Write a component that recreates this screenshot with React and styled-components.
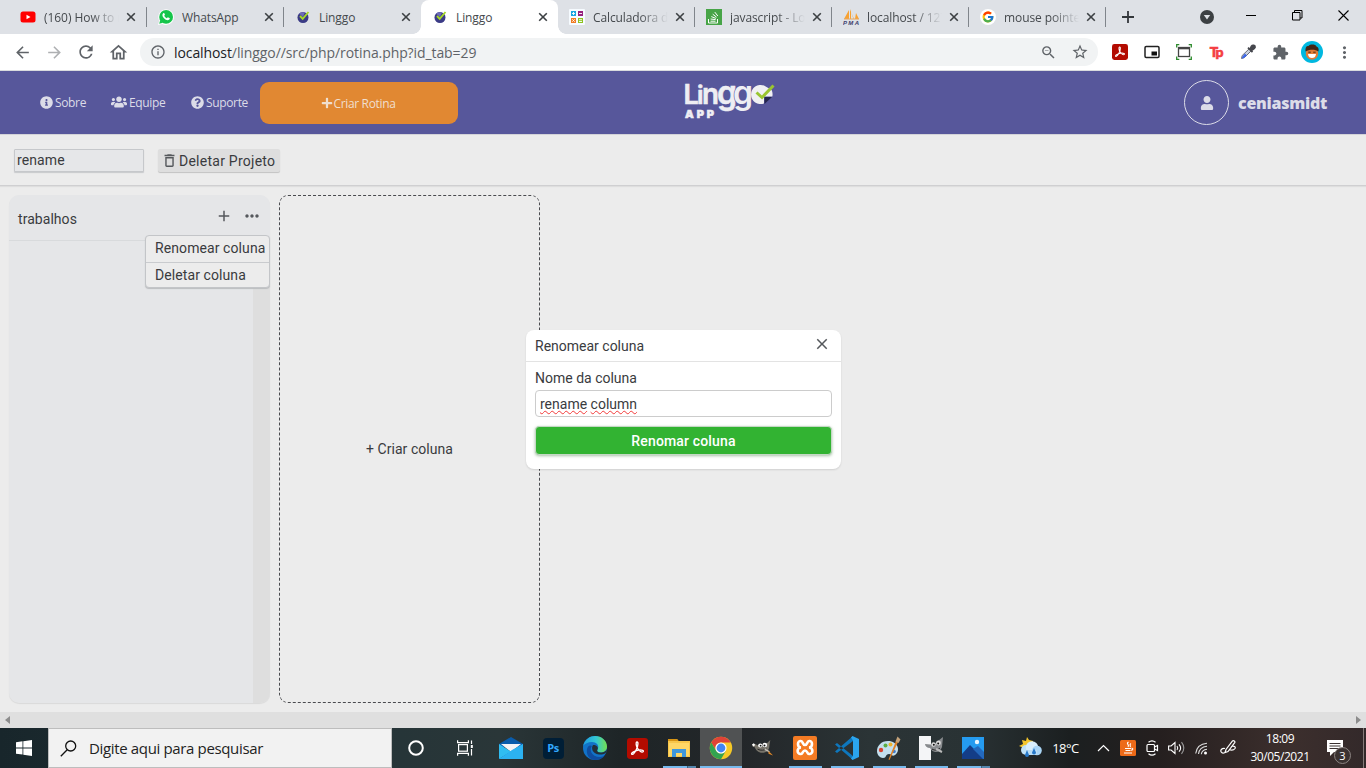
import React from "react";
import styled, { createGlobalStyle, css } from "styled-components";
import { FaInfoCircle, FaUsers, FaQuestionCircle, FaPlus, FaUser, FaWhatsapp, FaStackOverflow } from "react-icons/fa";
import {
  MdArrowBack, MdArrowForward, MdRefresh, MdOutlineHome, MdInfoOutline, MdStarBorder,
  MdExtension, MdMoreVert, MdPictureInPictureAlt, MdDeleteOutline, MdAdd, MdMoreHoriz,
  MdClose, MdOutlineZoomOut,
} from "react-icons/md";
import { FcGoogle } from "react-icons/fc";

const ui = `"Open Sans", "Noto Sans", sans-serif`;

const GlobalStyle = createGlobalStyle`
  * { box-sizing: border-box; }
  body { margin: 0; overflow: hidden; font-family: Roboto, sans-serif; color: #3a3b3e; }
  svg { display: block; flex: none; }
  button, input { font: inherit; color: inherit; letter-spacing: inherit; }
  button { border: 0; padding: 0; background: none; }
`;

const Screen = styled.div`
  width: 1366px;
  height: 768px;
  display: flex;
  flex-direction: column;
  overflow: hidden;
  background: #ececec;
`;

/* ---------- browser ---------- */
const TabStrip = styled.div`
  flex: none;
  height: 34px;
  padding-left: 9px;
  display: flex;
  background: #dee1e6;
`;
const Tab = styled.div`
  position: relative;
  width: ${(p) => (p.$first ? 138 : 137)}px;
  height: 34px;
  padding-left: ${(p) => (p.$first ? 11 : 11)}px;
  display: flex;
  align-items: center;
  font-family: ${ui};
  font-size: 12px;
  color: #45494d;
  border-radius: 8px 8px 0 0;
  ${(p) => p.$active && css`
    background: #fff;
    &::before, &::after {
      content: "";
      position: absolute;
      bottom: 0;
      width: 8px;
      height: 8px;
    }
    &::before { left: -8px; background: radial-gradient(circle at 0 0, #dee1e6 7.5px, #fff 8px); }
    &::after { right: -8px; background: radial-gradient(circle at 100% 0, #dee1e6 7.5px, #fff 8px); }
  `}
  ${(p) => p.$divider && css`box-shadow: inset -1px 0 #dee1e6;
    background: linear-gradient(#80858b, #80858b) right 0 top 7px / 1px 20px no-repeat;
    box-shadow: none;`}
`;
const Favicon = styled.span`
  width: 16px;
  height: 16px;
  margin-right: 8px;
  display: grid;
  place-items: center;
`;
const TabTitle = styled.span`
  width: 75px;
  overflow: hidden;
  white-space: nowrap;
  letter-spacing: ${(p) => p.$ls || -0.1}px;
  ${(p) => p.$fade && css`mask-image: linear-gradient(90deg, #000 62%, transparent 100%);`}
`;
const TabClose = styled.span`
  margin-left: 5px;
  width: 14px;
  height: 14px;
  display: grid;
  place-items: center;
`;
const NewTab = styled.span`
  width: 44px;
  display: grid;
  place-items: center;
  color: #33373b;
`;
const WindowButtons = styled.div`
  margin-left: 34px;
  display: flex;
  height: 30px;
  align-items: center;
`;
const WindowButton = styled.span`
  width: ${(p) => p.$w}px;
  display: grid;
  place-items: center;
`;
const Toolbar = styled.div`
  flex: none;
  height: 37px;
  padding-left: 6px;
  display: flex;
  align-items: center;
  background: #fff;
  border-bottom: 1px solid #d9dbde;
  color: #5f6368;
`;
const ToolButton = styled.span`
  width: 32px;
  height: 30px;
  display: grid;
  place-items: center;
  opacity: ${(p) => (p.$dim ? 0.5 : 1)};
`;
const AddressBar = styled.div`
  margin-left: 6px;
  width: 958px;
  height: 28px;
  padding: 0 2px 0 10px;
  display: flex;
  align-items: center;
  border-radius: 14px;
  background: #f1f3f4;
`;
const Url = styled.span`
  flex: 1;
  margin-left: 8px;
  font: 14px ${ui};
  letter-spacing: -0.09px;
  b { font-weight: 400; color: #202124; }
`;
const Extensions = styled.div`
  display: flex;
  margin-left: 6px;
`;

/* ---------- page ---------- */
const Header = styled.header`
  flex: none;
  height: 63px;
  display: flex;
  background: #57579b;
  color: #dcdce8;
  font-family: ${ui};
`;
const Nav = styled.nav`
  width: 458px;
  padding-left: 40px;
  display: flex;
  align-items: flex-start;
  font-size: 12px;
  letter-spacing: -0.35px;
`;
const NavLink = styled.a`
  width: ${(p) => p.$w}px;
  height: 62px;
  display: flex;
  align-items: center;
  gap: 2px;
  white-space: nowrap;
`;
const CreateButton = styled.button`
  width: 198px;
  height: 42px;
  margin-top: 11px;
  border-radius: 9px;
  background: #e18832;
  color: #f0dfce;
  display: flex;
  align-items: center;
  justify-content: center;
  gap: 1px;
  padding-right: 2px;
`;
const LogoWrap = styled.div`
  flex: 1;
  padding: 10px 0 0 224px;
`;
const Account = styled.div`
  width: 182px;
  display: flex;
  align-items: center;
  gap: 9px;
  font-weight: 800;
  font-size: 16px;
  letter-spacing: -0.25px;
`;
const Avatar = styled.span`
  width: 45px;
  height: 45px;
  border: 1px solid #dcdce8;
  border-radius: 50%;
  display: grid;
  place-items: center;
`;
const ProjectBar = styled.div`
  flex: none;
  height: 52px;
  padding: 0 14px;
  display: flex;
  align-items: center;
  gap: 14px;
  border-top: 1px solid #d3d3d8;
  border-bottom: 1px solid #cfcfd1;
  box-shadow: 0 1px 1px rgba(0, 0, 0, 0.06);
  font-size: 14px;
`;
const ProjectInput = styled.input`
  width: 130px;
  height: 23px;
  padding: 0 2px;
  border: 1px solid #c6c8cb;
  border-radius: 1px;
  background: #e6e7e9;
  box-shadow: 0 1px 1px #c8cacd;
  letter-spacing: 0.1px;
`;
const DeleteButton = styled.button`
  height: 23px;
  width: 122px;
  padding-left: 3px;
  display: flex;
  align-items: center;
  gap: 1px;
  background: #dedede;
  border-radius: 2px;
  box-shadow: 0 1px 1px rgba(0, 0, 0, 0.18);
  letter-spacing: 0.25px;
  margin-top: 1px;
  white-space: nowrap;
`;
const Board = styled.main`
  flex: 1;
  padding: 9px;
  display: flex;
  gap: 9px;
  font-size: 14px;
`;
const Column = styled.section`
  position: relative;
  width: 261px;
  height: 508px;
  border-radius: 10px;
  background: #e5e6e8;
  box-shadow: 0 1px 1px rgba(0, 0, 0, 0.08);
  display: flex;
  flex-direction: column;
`;
const ColumnHeader = styled.div`
  height: 46px;
  padding: 2px 8px 0 9px;
  display: flex;
  align-items: center;
  border-bottom: 1px solid #d8dadc;
  span { flex: 1; letter-spacing: 0.05px; }
`;
const ColumnIcon = styled.i`
  margin: -5px 0 0 9px;
  color: #55585c;
`;
const ColumnBody = styled.div`
  flex: 1;
  border-right: 17px solid #dedede;
  border-radius: 0 0 10px 10px;
`;
const Menu = styled.div`
  position: absolute;
  top: 40px;
  right: 0;
  width: 125px;
  height: 53px;
  border: 1px solid #c3c5c8;
  border-radius: 4px;
  background: #ececec;
  box-shadow: 0 1px 1px #bbbdbf;
`;
const MenuItem = styled.div`
  height: 26px;
  line-height: 25px;
  padding-left: 9px;
  white-space: nowrap;
  letter-spacing: 0.09px;
  & + & { border-top: 1px solid #c9cbce; line-height: 24px; }
`;
const NewColumn = styled.button`
  width: 261px;
  height: 508px;
  border: 1px dashed #4a4b4f;
  border-radius: 9px;
  letter-spacing: 0.05px;
`;
const PageScroll = styled.div`
  flex: none;
  height: 16px;
  padding: 0 5px;
  display: flex;
  align-items: center;
  justify-content: space-between;
  background: #dfdfdf;
`;
const Modal = styled.div`
  position: absolute;
  left: 526px;
  top: 330px;
  width: 315px;
  height: 139px;
  border-radius: 8px;
  background: #fff;
  box-shadow: 0 1px 2px rgba(0, 0, 0, 0.12);
  font-size: 14px;
  display: flex;
  flex-direction: column;
`;
const ModalHeader = styled.div`
  height: 32px;
  padding: 0 10px 0 9px;
  display: flex;
  align-items: center;
  justify-content: space-between;
  border-bottom: 1px solid #e3e3e3;
  svg { margin-top: -4px; }
`;
const ModalBody = styled.form`
  padding: 8px 9px 0;
  display: flex;
  flex-direction: column;
  label { line-height: 16px; height: 20px; }
`;
const ColumnNameField = styled.div`
  height: 27px;
  padding: 0 4px;
  line-height: 27px;
  border: 1px solid #ccc;
  border-radius: 4px;
  span {
    text-decoration: underline wavy #f23a3a 1px;
    text-underline-offset: 1px;
    text-decoration-skip-ink: none;
  }
`;
const SubmitButton = styled.button`
  margin-top: 9px;
  height: 29px;
  border: 1px solid #c5d8c5;
  border-radius: 4px;
  background: #32b332;
  box-shadow: 0 1px 3px rgba(40, 100, 40, 0.4);
  color: #fff;
  font-weight: 500;
  letter-spacing: 0.15px;
`;

/* ---------- taskbar ---------- */
const Taskbar = styled.footer`
  flex: none;
  height: 40px;
  display: flex;
  background: linear-gradient(90deg, #18262b 0, #263538 400px, #2a3638 500px, #1e2527 620px, #232629 740px, #2b3436 870px, #293234 970px, #1b1f20 1070px, #251f1f 1160px, #3c2f2d 1290px, #33292a 1366px);
  color: #fff;
  font-family: ${ui};
`;
const StartButton = styled.div`
  width: 48px;
  display: grid;
  place-items: center;
`;
const SearchBox = styled.div`
  width: 344px;
  border: 1px solid #bdbdbd;
  background: #f2f2f2;
  color: #222;
  display: flex;
  align-items: center;
  padding-left: 11px;
  gap: 12px;
  font-size: 15px;
  letter-spacing: -0.35px;
`;
const TaskCell = styled.div`
  position: relative;
  width: ${(p) => p.$w || 42}px;
  display: grid;
  place-items: center;
  ${(p) => p.$active && css`
    background: #505253;
    box-shadow: inset 0 -2px #76b9ed;
  `}
  ${(p) => p.$open && css`
    background: linear-gradient(#76b9ed, #76b9ed) center bottom / 33px 2px no-repeat;
  `}
  ${(p) => p.$stack && css`
    background: linear-gradient(90deg, #76b9ed 24px, #41617a 24px, #41617a 25px, #5486ad 25px) center bottom / 33px 2px no-repeat;
  `}
`;
const PhotoshopBadge = styled.span`
  width: 21px;
  height: 21px;
  border-radius: 4px;
  background: #001e36;
  color: #31a8ff;
  font-size: 11px;
  font-weight: 700;
  line-height: 20px;
  text-align: center;
  letter-spacing: -0.4px;
`;
const Tray = styled.div`
  flex: 1;
  display: flex;
  align-items: center;
  padding-left: 23px;
`;
const TrayItem = styled.span`
  width: ${(p) => p.$w}px;
  display: grid;
  place-items: center;
  font-size: 13px;
  letter-spacing: -0.5px;
  white-space: nowrap;
`;
const Clock = styled.div`
  width: 80px;
  text-align: center;
  font-size: 12px;
  line-height: 18px;
  letter-spacing: -0.45px;
  white-space: nowrap;
`;
const Notice = styled.div`
  position: relative;
  width: 44px;
  height: 40px;
  padding: 12px 0 0 7px;
  border-right: 1px solid #857b79;
`;
const Count = styled.span`
  position: absolute;
  left: 14px;
  top: 19px;
  width: 17px;
  height: 17px;
  border: 1px solid #8c8482;
  border-radius: 50%;
  background: #3a3231;
  font-size: 11px;
  line-height: 15px;
  text-align: center;
`;

/* ---------- drawings ---------- */
const YouTube = () => (
  <svg width="16" height="16" viewBox="0 0 16 16"><rect x=".5" y="2.5" width="15" height="11" rx="2.5" fill="#f00" /><path d="M6.5 5.7v4.6l4-2.3z" fill="#fff" /></svg>
);
const Whats = () => (
  <svg width="16" height="16" viewBox="0 0 16 16"><path d="M0 16l1.2-4.2A7.8 7.8 0 1 1 4.4 15z" fill="#fff" /><circle cx="8.1" cy="7.9" r="6.9" fill="#16c54b" /><path d="M1.2 14.8l1-3.8 2.8 2.8z" fill="#16c54b" /><path d="M5.2 4.3c.5-.4 1-.3 1.2.2l.6 1.3-.8 1c.6 1.2 1.4 1.9 2.6 2.5l1-1 1.7.8c.5.3.3 1.1-.2 1.5-1.6 1.4-3.6.3-5-1-1.500-1.400-2.700-3.700-1.100-5.300z" fill="#fff" /></svg>
);
const LinggoMark = () => (
  <svg width="14" height="14" viewBox="0 0 14 14"><circle cx="7" cy="7.500" r="5.500" fill="#3b3b86" /><path d="M3 3.500l2-1.300h4L7 7z" fill="#6c6cb8" /><path d="M4 6l2.700 2.800L12.500 2" stroke="#a6d829" strokeWidth="1.900" fill="none" /></svg>
);
const Calc = () => (
  <svg width="16" height="16" viewBox="0 0 16 16"><rect width="16" height="16" rx="1" fill="#f6fbff" /><path d="M2 2h5v5H2z" fill="#19a5e0" /><path d="M9 2h5v5H9z" fill="#96227e" /><path d="M2 9h5v5H2z" fill="#f07c22" /><path d="M9 9h5v5H9z" fill="#8dc21f" /><path d="M3 4.500h3M4.500 3v3M10 4.500h3M3.300 10.300l2.400 2.400m0-2.400l-2.400 2.400M10 10.700h3M10 12.500h3" stroke="#fff" strokeWidth=".9" /></svg>
);
const Stack = () => (
  <svg width="16" height="16" viewBox="0 0 16 16"><path fill="#47a447" d="M0 0h16v16H0z" /><path d="M2.500 10v4h9v-4M4.500 12.200h5M4.600 10l5 .6M5.300 7.600l4.600 1.800M6.700 5.200l3.900 3M8.800 3.100l3 3.900" stroke="#fff" strokeWidth="1" fill="none" /></svg>
);
const Pma = () => (
  <svg width="17" height="16" viewBox="0 0 17 16"><path d="M6 1v9H1zM8 3v7h3zM13 4l3 6h-4zM7 0l3.500 10H7z" fill="#f7a233" /><path d="M1 10h15" stroke="#e8a860" /><text x="0" y="15.500" fontFamily="Liberation Sans" fontSize="6" fontWeight="700" fontStyle="italic" fill="#3d3d6b" textLength="16">PMA</text></svg>
);
const Google = () => (
  <svg width="16" height="16" viewBox="0 0 16 16"><circle cx="8" cy="8" r="8" fill="#fff" /><g transform="translate(1.500 1.500)"><FcGoogle size={13} /></g></svg>
);
const CrossIcon = () => (
  <svg width="10" height="10" viewBox="0 0 10 10"><path d="M1.200 1.200l7.600 7.600M8.800 1.200L1.200 8.800" stroke="#3c4043" strokeWidth="1.600" /></svg>
);
const PdfGlyph = ({ s }) => (
  <svg width={s} height={s} viewBox="0 0 20 20"><rect width="20" height="20" rx="3" fill="#b30b00" /><path d="M9.300 3.800c1.700-.5 1.300 3.500-.2 6.700-1.400 3-3.300 5.500-4.400 5-1.500-.8 2.300-3.500 6.300-4 3.800-.5 5.300.7 4.300 1.600-1.400 1.200-4.600-1.700-5.700-4-.9-2-1.300-5-.3-5.300z" fill="none" stroke="#fff" strokeWidth="1.300" /></svg>
);
const Capture = () => (
  <svg width="16" height="16" viewBox="0 0 16 16"><rect x="2.500" y="3.500" width="11" height="9" fill="none" stroke="#444" strokeWidth="1.300" /><path d="M2 4.500h12" stroke="#444" strokeWidth="1.600" /><path d="M.7 3.500V.7h2.600M12.700.7h2.600v2.800M15.300 12.500v2.800h-2.600M3.300 15.300H.7v-2.800" fill="none" stroke="#2c8a2c" strokeWidth="1.300" /></svg>
);
const TpMark = styled.span`
  font: 900 14px/16px Lato, sans-serif;
  letter-spacing: -1.2px;
  color: #f43e42;
  -webkit-text-stroke: 0.6px #f43e42;
`;
const Dropper = () => (
  <svg width="16" height="16" viewBox="0 0 16 16"><path d="M9.500 4.500l2 2-7 7-3 1 .7-3z" fill="#c9d0dc" stroke="#6a6d78" /><path d="M5 9.500l2 2-3.400 2.800-1.800.2.500-1.800z" fill="#3d67e8" /><path d="M8 3.700l4.500 4.500M10 5.500l1.500-3.300c1-1.500 3.800-1 3.500 1.200-.1 1-1 1.500-3.500 3z" stroke="#46474d" strokeWidth="1.800" fill="#46474d" /></svg>
);
const Face = () => (
  <svg width="22" height="22" viewBox="0 0 22 22"><circle cx="11" cy="11" r="11" fill="#00b8e0" /><circle cx="11" cy="12.500" r="6.200" fill="#e27c35" /><path d="M4.500 10.500c-.5-4 1-6 3-5.500 1.500-2 7-2 8 .4 2 .3 2.600 3 1.900 5.100-3-2.500-9-2.500-12.900 0z" fill="#432616" /><path d="M7 13h8c-.3 3-2 4-4 4s-3.700-1-4-4z" fill="#fff" /><path d="M7.300 11.200h2.500M12.200 11.200h2.500" stroke="#53280f" strokeWidth="1" /></svg>
);
const Logo = () => (
  <svg width="96" height="42" viewBox="0 0 96 42">
    <g fill="#eeeef3" stroke="#eeeef3" strokeWidth=".6" fontFamily="Inter, sans-serif" fontWeight="600">
      <text x="1.500" y="22.500" fontSize="27">L</text>
      <text x="15" y="22.500" fontSize="25">i</text>
      <text x="20" y="22.500" fontSize="29" textLength="17" lengthAdjust="spacingAndGlyphs">n</text>
      <text x="35" y="22.500" fontSize="32">g</text>
      <text x="51" y="22.500" fontSize="32" stroke="#57579b" strokeWidth="1.200" paintOrder="stroke">g</text>
      <text x="3" y="36.500" fontSize="11" fontWeight="900" textLength="29">APP</text>
    </g>
    <path d="M82 4.500a9.600 9.600 0 1 0 0 18v-7h8.300a9.600 9.600 0 0 0-.7-6.500z" fill="#f0f0f3" />
    <path d="M82.500 16h7.500l-7.500 7z" fill="#25264f" />
    <path d="M74.500 11.500l5.500 5L91.500 4.500" fill="none" stroke="#9ac531" strokeWidth="3" />
  </svg>
);
const WindowsMark = () => (
  <svg width="16" height="16" viewBox="0 0 16 16" fill="#fff"><path d="M0 2.200L6.500 1.300v6.200H0zM7.300 1.200L16 0v7.500H7.300zM0 8.400h6.500v6.200L0 13.700zM7.300 8.400H16V16l-8.700-1.200z" /></svg>
);
const SearchGlyph = () => (
  <svg width="17" height="17" viewBox="0 0 17 17" fill="none" stroke="#111" strokeWidth="1.300"><circle cx="10.700" cy="6" r="5" /><path d="M7.200 9.700L.8 16.200" /></svg>
);
const TaskView = () => (
  <svg width="16" height="16" viewBox="0 0 16 16" fill="none" stroke="#fff" strokeWidth="1.200"><path d="M.6.300v2.300h10.800V.3M.6 15.700v-2.300h10.800v2.300" /><rect x="1.600" y="4.600" width="8.800" height="6.600" /><path d="M14.500.5V4M14.500 9v6.500" /><rect x="13.800" y="5" width="2" height="3" fill="#fff" stroke="none" /></svg>
);
const Mail = () => (
  <svg width="24" height="22" viewBox="0 0 24 22"><path d="M0 7l12-7 12 7v3H0z" fill="#0a5cab" /><path d="M2 7h20l-10 8z" fill="#f4f4f6" /><path d="M0 7l12 7.500L0 22z" fill="#30bdf2" /><path d="M24 7v15H0z" fill="#1c98e4" /><path d="M24 7v15H0l13-9z" fill="#2cb2f1" /></svg>
);
const Edge = () => (
  <svg width="24" height="24" viewBox="0 0 24 24"><defs><linearGradient id="edgeTop"><stop stopColor="#1e9be0" /><stop offset=".55" stopColor="#34c8d3" /><stop offset="1" stopColor="#74e04e" /></linearGradient></defs><circle cx="12" cy="12" r="12" fill="#1273c8" /><path d="M0 10C2 3 7 0 12 0c7 0 12 5 12 10.500 0 4-3 6-6.500 6-3 0-4-1.500-3-3C17 9 13 6 9 6c-4 0-7.500 2-9 4z" fill="url(#edgeTop)" /><path d="M9 10c-3 3-1 11 8 11 2 0 4-.8 5-2-3 4.500-7 5-10 5C6 24 3 18 4 13c.5-2.500 2.700-4.500 5-3z" fill="#0f4da0" /><path d="M10 9c-2 3-1 8.500 6 9.500 2.500.3 5-.4 6.500-1.500l1-1L24 13c-1 2.500-3.600 3.800-6.500 3.500-3 0-4-1.500-3-3 1.300-2-1-5-4.500-4.500z" fill="#22303a" /></svg>
);
const Folder = () => (
  <svg width="22" height="18" viewBox="0 0 22 18"><path d="M0 0h9l1.500 2H22v16H0z" fill="#f8c64a" /><path d="M0 0h9l1.500 2H0z" fill="#d99514" /><path d="M1 4h20v13H1z" fill="#ffd766" /><path d="M4 18v-8h14v8h-4v-4H8v4z" fill="#3f97dc" /></svg>
);
const Chrome = () => (
  <svg width="24" height="24" viewBox="0 0 24 24"><circle cx="12" cy="12" r="11.200" fill="#f6c927" /><path d="M2.300 6.400a11.200 11.200 0 0 1 19.400 0H12a5.600 5.600 0 0 0-4.800 8.400z" fill="#df4337" /><path d="M2.300 6.400A11.200 11.200 0 0 0 12 23.200l4.900-8.400a5.600 5.600 0 0 1-9.700 0z" fill="#32a350" /><circle cx="12" cy="12" r="5.600" fill="#fff" /><circle cx="12" cy="12" r="4.400" fill="#4285f4" /></svg>
);
const Gimp = ({ c = "#77736a", s = 22 }) => (
  <svg width={s} height={s * 0.75} viewBox="0 0 24 18"><path d="M0 5c2-2 4 0 7 1l6-1c3-1 5-3 7-5l-1 6c0 5-3 8-8 8-4 0-7-3-8-6-2 0-3-1-3-3z" fill={c} /><circle cx="9" cy="6" r="2.300" fill="#fff" /><circle cx="14" cy="5.500" r="2.500" fill="#fff" /><circle cx="9.400" cy="6.200" r="1" fill="#111" /><circle cx="13.600" cy="6" r="1.100" fill="#111" /><path d="M0 5l2-1.500 1.500 2L1.500 7z" fill="#fff" /><path d="M6 10c4 2 7 1 10 0" stroke="#222" fill="none" /><path d="M14 10l5 3" stroke="#c9c4ba" strokeWidth="1.500" /><path d="M18 12l5 5-5-2z" fill="#e58a27" /></svg>
);
const Xampp = () => (
  <svg width="24" height="24" viewBox="0 0 24 24"><rect width="24" height="24" rx="2" fill="#f47b24" /><path d="M8 11.500c-4-.4-4-7 0-6.500 2 .2 1.500 4 4 4s2-3.800 4-4c4-.5 4 6.100 0 6.500 4.500 0 4.500 7 0 6.500-2-.2-1.500-3.500-4-3.500s-2 3.300-4 3.500c-4.500.5-4.500-6.500 0-6.500z" fill="none" stroke="#fff" strokeWidth="2.600" /></svg>
);
const VsCode = () => (
  <svg width="24" height="24" viewBox="0 0 24 24"><path d="M0 8.500L2 7l16 13v4zM0 15.500L2 17 18 5V0z" fill="#0e77bd" /><path d="M17.500 0L24 3v18l-6.500 3L16 22.500 18 20V4.500L16 1.500z" fill="#2ba5ee" /></svg>
);
const Paint = () => (
  <svg width="24" height="24" viewBox="0 0 24 24"><path d="M11 5C4 5 0 10 0 15c0 4 3 7 6 7 4 0 2-4 6-4 3 0 3 3 6 1 6-4 3-14-7-14z" fill="#c3dfee" /><circle cx="4" cy="14" r="2.200" fill="#d8432f" /><circle cx="8.500" cy="9.500" r="2" fill="#5aae42" /><circle cx="13.500" cy="8.500" r="2" fill="#edb22e" /><circle cx="17" cy="15.500" r="1.800" fill="#3e7ccd" /><path d="M19 5l2 1-8.500 18-1-.5z" fill="#dd8128" /><path d="M18.500 5.500l2-5 3 3-2 3.500z" fill="#c3a27a" /></svg>
);
const GimpFile = () => (
  <svg width="24" height="24" viewBox="0 0 24 24"><path d="M0 0h12v24H0z" fill="#f4f5f7" /><path d="M6 8c3 0 5 1 9 0l9-7-1 10c-2 6-9 7-12 1-3 0-5-2-5-4z" fill="#888b8e" /><circle cx="14.500" cy="8.500" r="2.200" fill="#ddd" /><circle cx="19.500" cy="7" r="2.400" fill="#ddd" /><circle cx="14.800" cy="8.800" r="1" fill="#111" /><circle cx="19.200" cy="7.500" r="1" fill="#111" /><path d="M13 13c3 2 6 1 8-1" stroke="#222" fill="none" /><path d="M17 13l6 3" stroke="#bbb" strokeWidth="2" /></svg>
);
const Photos = () => (
  <svg width="22" height="22" viewBox="0 0 22 22"><path d="M0 0h22v22H0z" fill="#259bf0" /><path d="M0 17L8 8l14 14H0z" fill="#143d87" /><path d="M11 12l5-3 6 6v7h-1z" fill="#2369bd" /><circle cx="15" cy="5" r="2.200" fill="#eaf6ff" /></svg>
);
const Weather = () => (
  <svg width="23" height="22" viewBox="0 0 23 22"><path d="M8 0l2 3 4 1v8l-8 2-1-3-5-2 4-2-1-4 4 1z" fill="#f5c62c" /><circle cx="7" cy="13" r="5" fill="#bfe1f7" /><circle cx="13" cy="10.500" r="6.200" fill="#d9eefb" /><circle cx="18" cy="13.500" r="4.800" fill="#a9d5f5" /><path d="M7 13h11v5H7z" fill="#b9ddf6" /><path d="M8 13l2 5a2 2 0 0 1-4 0zM15 11l2 4.500a2 2 0 0 1-4 0z" fill="#2678c9" /></svg>
);
const JavaBadge = () => (
  <svg width="16" height="16" viewBox="0 0 16 16"><rect width="16" height="16" rx="1.500" fill="#ed6a18" /><path d="M8.500 2c-3 2 1.500 2.500-.5 5M11 3.500c-2.500 1.500.5 2-1 3.500M5 8.500h6M5.500 10.500h5M4 13h8M11.500 8.300c2-.5 1.500 2-.5 2" stroke="#fff" strokeWidth="1.100" fill="none" /></svg>
);
const Camera = () => (
  <svg width="13" height="16" viewBox="0 0 13 16" fill="none" stroke="#fff" strokeWidth="1.200"><rect x="1" y="4.500" width="7.500" height="7" rx="1" /><path d="M8.500 7l3-1.500v5l-3-1.500M2.500 2.300c2-1.600 5-1.600 7 0M2.500 13.700c2 1.600 5 1.600 7 0" /></svg>
);
const Speaker = () => (
  <svg width="17" height="14" viewBox="0 0 17 14" fill="none" stroke="#fff" strokeWidth="1.100"><path d="M.6 5v4h2.500L7 12.500v-11L3.100 5zM9 5c1 1.300 1 2.700 0 4M11 3.300c2.200 2.500 2.200 5 0 7.400" /><path d="M13.500 1.200c3 3.800 3 7.800 0 11.600" stroke="#9a9a9a" /></svg>
);
const Wifi = () => (
  <svg width="13" height="13" viewBox="0 0 13 13" fill="none" stroke="#ddd" strokeWidth="1.100"><path d="M.7 11.500C1.500 5.500 5.500 1.800 12 1.300M3.500 12c.5-4.500 3.500-7.300 8.500-7.800M6.300 12.300c.4-3 2.200-4.700 5.700-5.100" /><circle cx="10.500" cy="11" r="1.500" fill="#fff" stroke="none" /></svg>
);
const Pen = () => (
  <svg width="17" height="16" viewBox="0 0 17 16" fill="none" stroke="#fff" strokeWidth="1.200"><path d="M5 12.500l1-3L12.500 1c1-1 3 .5 2.200 1.700L8 11.500zM5 8.500c-3-.6-5 1.500-3.800 3.500.8 1.300 2.300 1.300 3.800.5M11 6.500c3-1 5 .5 4 2-1 1.300-3.500 2-6 1" /></svg>
);

const tabs = [
  { icon: <YouTube />, title: "(160) How to m", fade: true, first: true, divider: true, ls: -0.05 },
  { icon: <Whats />, title: "WhatsApp", divider: true, ls: -0.1 },
  { icon: <LinggoMark />, title: "Linggo", ls: -0.1 },
  { icon: <LinggoMark />, title: "Linggo", active: true, ls: -0.1 },
  { icon: <Calc />, title: "Calculadora de", fade: true, divider: true, ls: -0.1 },
  { icon: <Stack />, title: "javascript - Lod", fade: true, divider: true, ls: -0.1 },
  { icon: <Pma />, title: "localhost / 127", fade: true, divider: true, ls: -0.1 },
  { icon: <Google />, title: "mouse pointer", fade: true, divider: true, ls: -0.1 },
];

export default function App() {
  return (
    <Screen>
      <GlobalStyle />
      <TabStrip>
        {tabs.map((t, i) => (
          <Tab key={i} $first={t.first} $active={t.active} $divider={t.divider}>
            <Favicon>{t.icon}</Favicon>
            <TabTitle $fade={t.fade} $ls={t.ls}>{t.title}</TabTitle>
            <TabClose><CrossIcon /></TabClose>
          </Tab>
        ))}
        <NewTab><svg width="12" height="12" viewBox="0 0 12 12"><path d="M6 0v12M0 6h12" stroke="currentColor" strokeWidth="1.800" /></svg></NewTab>
        <WindowButtons>
          <WindowButton $w={46}><svg width="14" height="14" viewBox="0 0 14 14" style={{ marginTop: 4 }}><circle cx="7" cy="7" r="7" fill="#3c4043" /><path d="M3.800 5h6.400L7 9.500z" fill="#dee1e6" /></svg></WindowButton>
          <WindowButton $w={42}><svg width="10" height="10"><path d="M0 5.500h10" stroke="#000" /></svg></WindowButton>
          <WindowButton $w={50}><svg width="11" height="11" fill="none" stroke="#000"><path d="M.5 2.500h7.500v7.500H.5zM2.500 2.500V.5H10v7.500H8" /></svg></WindowButton>
          <WindowButton $w={42}><svg width="11" height="11"><path d="M.5.5l10 10M10.500.5l-10 10" stroke="#000" strokeWidth="1.100" /></svg></WindowButton>
        </WindowButtons>
      </TabStrip>
      <Toolbar>
        <ToolButton><MdArrowBack size={19} /></ToolButton>
        <ToolButton $dim><MdArrowForward size={19} /></ToolButton>
        <ToolButton><MdRefresh size={20} /></ToolButton>
        <ToolButton><MdOutlineHome size={21} /></ToolButton>
        <AddressBar>
          <MdInfoOutline size={16} />
          <Url><b>localhost</b>/linggo//src/php/rotina.php?id_tab=29</Url>
          <ToolButton><MdOutlineZoomOut size={17} /></ToolButton>
          <ToolButton><MdStarBorder size={18} /></ToolButton>
        </AddressBar>
        <Extensions>
          <ToolButton><PdfGlyph s={16} /></ToolButton>
          <ToolButton><svg width="16" height="14" viewBox="0 0 16 14"><rect x="1" y="1.500" width="14" height="11" rx="1.200" fill="none" stroke="#222" strokeWidth="1.500" /><path d="M7.500 6.500h5.500v4H7.500z" fill="#111" /></svg></ToolButton>
          <ToolButton><Capture /></ToolButton>
          <ToolButton><TpMark>Tp</TpMark></ToolButton>
          <ToolButton><Dropper /></ToolButton>
          <ToolButton><MdExtension size={17} /></ToolButton>
          <ToolButton><Face /></ToolButton>
          <ToolButton><MdMoreVert size={19} /></ToolButton>
        </Extensions>
      </Toolbar>

      <Header>
        <Nav>
          <NavLink $w={71}><FaInfoCircle size={13} />Sobre</NavLink>
          <NavLink $w={80}><FaUsers size={16} />Equipe</NavLink>
          <NavLink $w={69}><FaQuestionCircle size={13} />Suporte</NavLink>
          <CreateButton><FaPlus size={12} />Criar Rotina</CreateButton>
        </Nav>
        <LogoWrap><Logo /></LogoWrap>
        <Account><Avatar><FaUser size={14} /></Avatar>ceniasmidt</Account>
      </Header>
      <ProjectBar>
        <ProjectInput defaultValue="rename" />
        <DeleteButton><MdDeleteOutline size={17} color="#55585c" />Deletar Projeto</DeleteButton>
      </ProjectBar>
      <Board>
        <Column>
          <ColumnHeader>
            <span>trabalhos</span>
            <ColumnIcon><MdAdd size={18} /></ColumnIcon>
            <ColumnIcon><MdMoreHoriz size={20} /></ColumnIcon>
          </ColumnHeader>
          <ColumnBody />
          <Menu>
            <MenuItem>Renomear coluna</MenuItem>
            <MenuItem>Deletar coluna</MenuItem>
          </Menu>
        </Column>
        <NewColumn>+ Criar coluna</NewColumn>
      </Board>
      <PageScroll>
        <svg width="5" height="8"><path d="M5 0v8L0 4z" fill="#8c8c8c" /></svg>
        <svg width="5" height="8"><path d="M0 0v8l5-4z" fill="#8c8c8c" /></svg>
      </PageScroll>

      <Modal>
        <ModalHeader>Renomear coluna<MdClose size={18} color="#55585c" /></ModalHeader>
        <ModalBody>
          <label>Nome da coluna</label>
          <ColumnNameField><span>rename</span> <span>column</span></ColumnNameField>
          <SubmitButton type="button">Renomar coluna</SubmitButton>
        </ModalBody>
      </Modal>

      <Taskbar>
        <StartButton><WindowsMark /></StartButton>
        <SearchBox><SearchGlyph />Digite aqui para pesquisar</SearchBox>
        <TaskCell $w={48}><svg width="16" height="16"><circle cx="8" cy="8" r="6.800" fill="none" stroke="#fff" strokeWidth="2" /></svg></TaskCell>
        <TaskCell $w={50}><TaskView /></TaskCell>
        <TaskCell><Mail /></TaskCell>
        <TaskCell><PhotoshopBadge>Ps</PhotoshopBadge></TaskCell>
        <TaskCell><Edge /></TaskCell>
        <TaskCell><PdfGlyph s={21} /></TaskCell>
        <TaskCell $stack><Folder /></TaskCell>
        <TaskCell $active><Chrome /></TaskCell>
        <TaskCell><Gimp /></TaskCell>
        <TaskCell $open><Xampp /></TaskCell>
        <TaskCell $open><VsCode /></TaskCell>
        <TaskCell $open><Paint /></TaskCell>
        <TaskCell $open><GimpFile /></TaskCell>
        <TaskCell $stack><Photos /></TaskCell>
        <Tray>
          <TrayItem $w={26}><Weather /></TrayItem>
          <TrayItem $w={45}>18°C</TrayItem>
          <TrayItem $w={30}><svg width="13" height="8"><path d="M1 7l5.500-5.500L12 7" fill="none" stroke="#fff" strokeWidth="1.200" /></svg></TrayItem>
          <TrayItem $w={20}><JavaBadge /></TrayItem>
          <TrayItem $w={28}><Camera /></TrayItem>
          <TrayItem $w={20}><Speaker /></TrayItem>
          <TrayItem $w={30}><Wifi /></TrayItem>
          <TrayItem $w={24}><Pen /></TrayItem>
          <Clock>18:09<br />30/05/2021</Clock>
          <Notice>
            <svg width="16" height="16" viewBox="0 0 16 16"><path d="M0 0h16v12H7l-4 4v-4H0z" fill="#fff" /><path d="M2.500 3.500h11M2.500 6h11M2.500 8.500h11" stroke="#3a3231" /></svg>
            <Count>3</Count>
          </Notice>
        </Tray>
      </Taskbar>
    </Screen>
  );
}
